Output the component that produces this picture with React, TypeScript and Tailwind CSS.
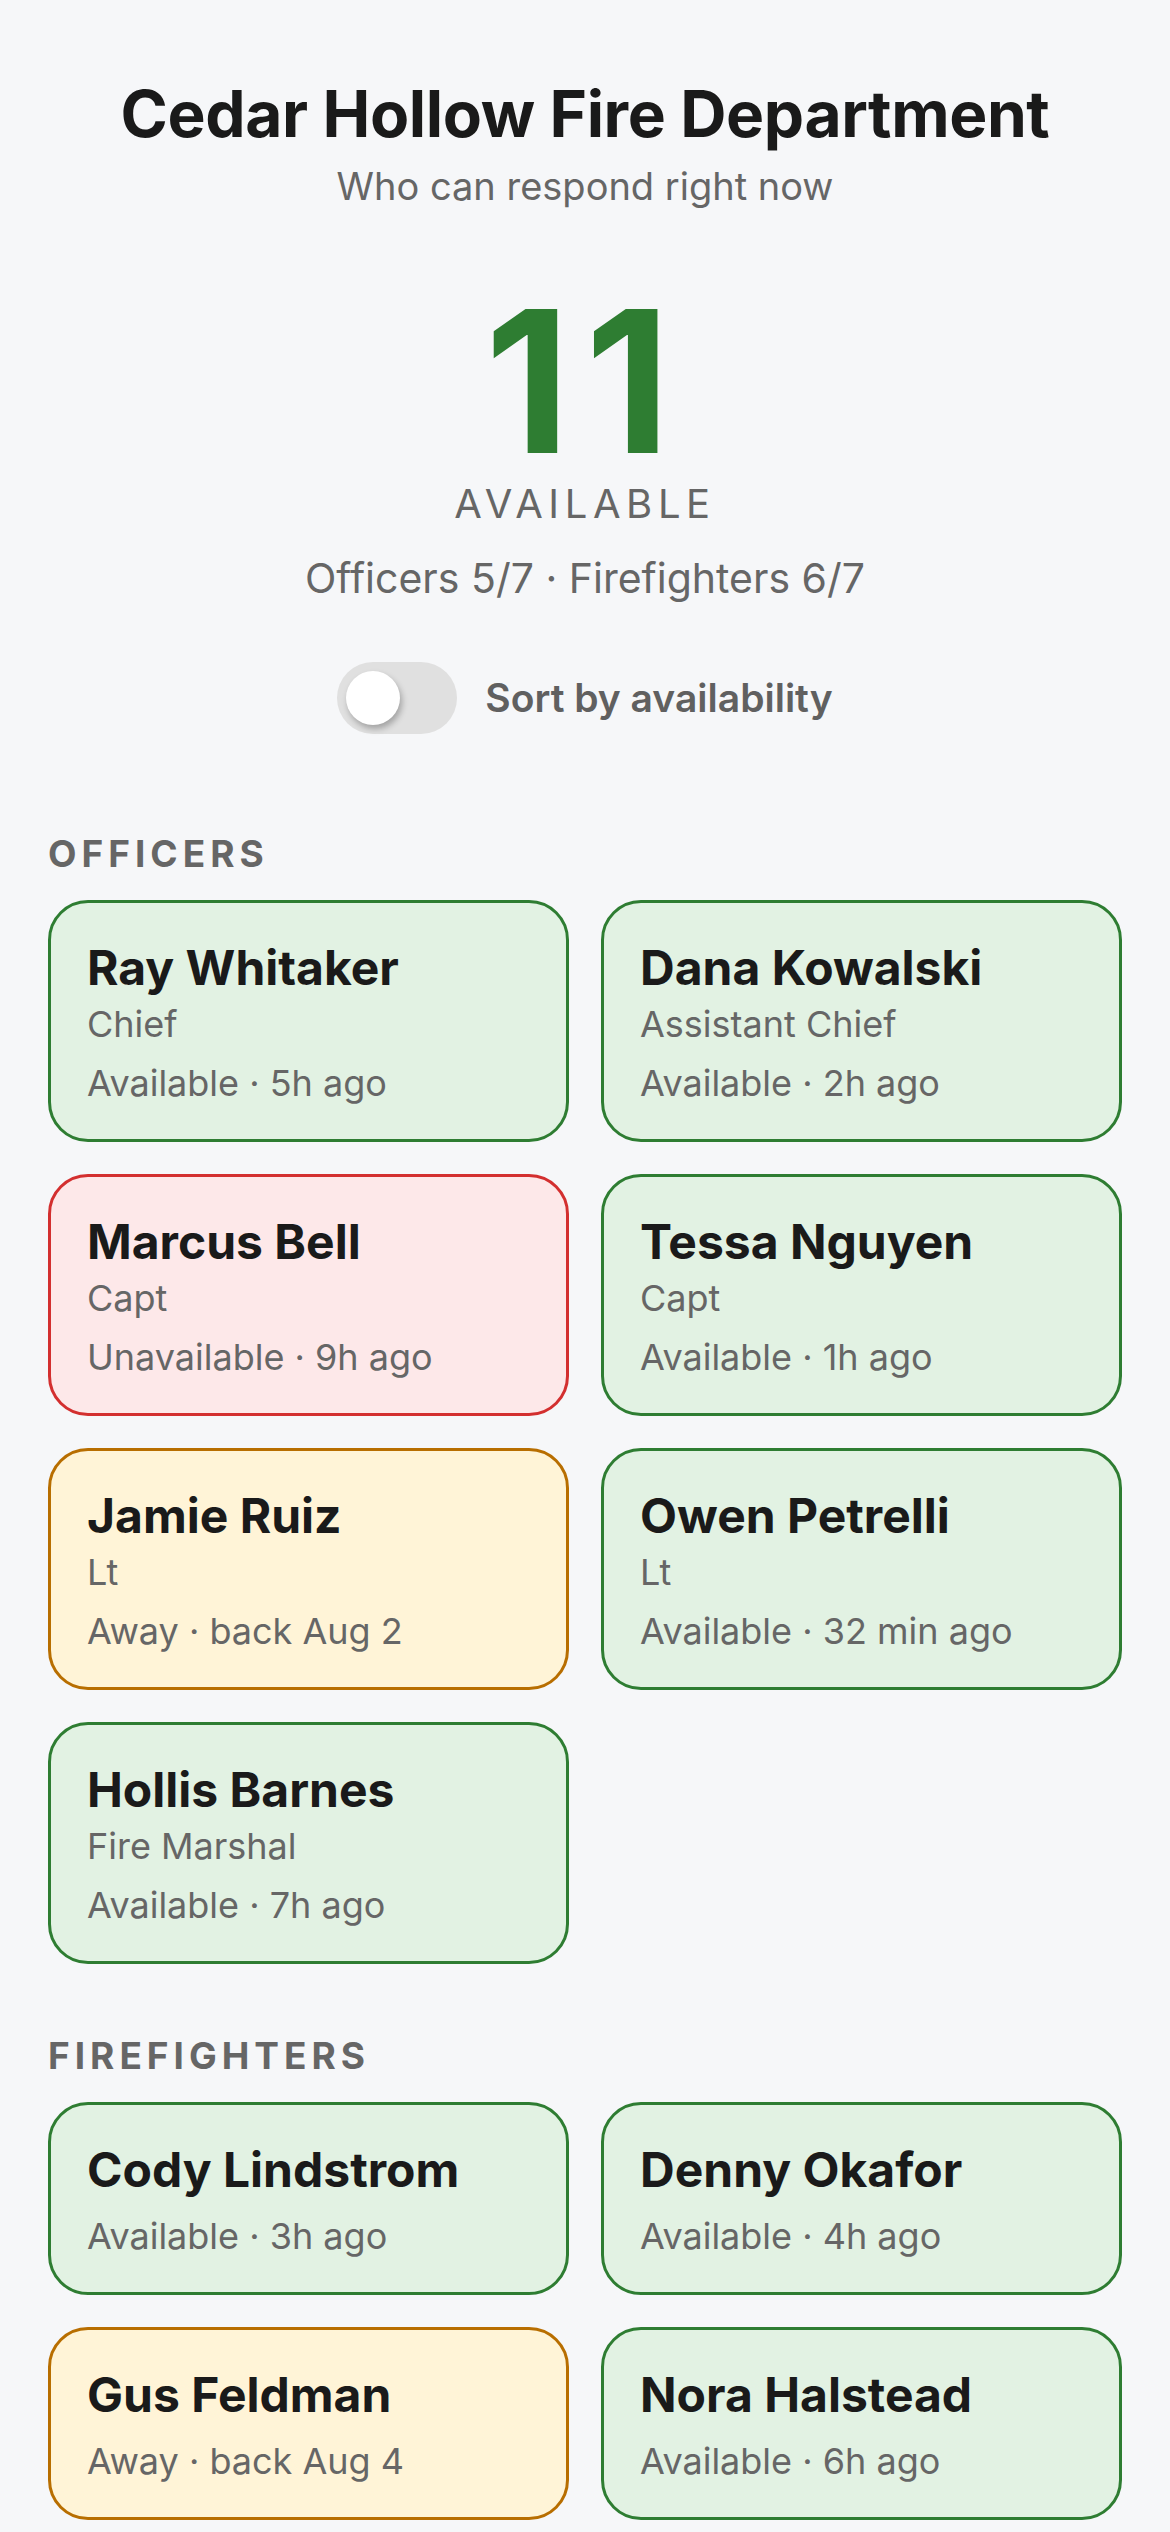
import { useState } from 'react';

type Status = 'available' | 'unavailable' | 'away';

type Member = {
  name: string;
  role?: string;
  status: Status;
  note: string;
};

const officers: Member[] = [
  { name: 'Ray Whitaker', role: 'Chief', status: 'available', note: '5h ago' },
  { name: 'Dana Kowalski', role: 'Assistant Chief', status: 'available', note: '2h ago' },
  { name: 'Marcus Bell', role: 'Capt', status: 'unavailable', note: '9h ago' },
  { name: 'Tessa Nguyen', role: 'Capt', status: 'available', note: '1h ago' },
  { name: 'Jamie Ruiz', role: 'Lt', status: 'away', note: 'back Aug 2' },
  { name: 'Owen Petrelli', role: 'Lt', status: 'available', note: '32 min ago' },
  { name: 'Hollis Barnes', role: 'Fire Marshal', status: 'available', note: '7h ago' },
];

const firefighters: Member[] = [
  { name: 'Cody Lindstrom', status: 'available', note: '3h ago' },
  { name: 'Denny Okafor', status: 'available', note: '4h ago' },
  { name: 'Gus Feldman', status: 'away', note: 'back Aug 4' },
  { name: 'Nora Halstead', status: 'available', note: '6h ago' },
];

const statusLabel: Record<Status, string> = {
  available: 'Available',
  unavailable: 'Unavailable',
  away: 'Away',
};

const statusCard: Record<Status, string> = {
  available: 'border-[#2e7d32] bg-[#e2f2e3]',
  unavailable: 'border-[#d32f2f] bg-[#fde8e9]',
  away: 'border-[#b86e00] bg-[#fff4d7]',
};

export default function App() {
  const [sorted, setSorted] = useState(false);

  return (
    <div
      className="min-h-screen bg-[#f6f7f9] px-[48px] pb-[60px] pt-[75px] text-[#1a1a1a]"
      style={{ fontFamily: 'Inter, "Noto Sans", sans-serif' }}
    >
      <header className="flex flex-col items-center text-center">
        <h1 className="text-[64px] font-bold leading-[77px] tracking-[-0.006em]">Cedar Hollow Fire Department</h1>
        <p className="mt-[11px] text-[38px] leading-[46px] text-[#666666]">Who can respond right now</p>

        <div className="mt-[73px] text-[198px] font-bold leading-[198px] tracking-[15px] text-[#2e7d32]">11</div>
        <div className="text-[40px] leading-[48px] tracking-[0.14em] text-[#666666]">AVAILABLE</div>
        <p className="mt-[25px] text-[41px] leading-[50px] text-[#666666]">Officers 5/7 · Firefighters 6/7</p>

        <button
          type="button"
          onClick={() => setSorted((value) => !value)}
          className="mt-[59px] flex items-center gap-[28px]"
        >
          <span
            className={`flex h-[72px] w-[120px] items-center rounded-full px-[9px] ${
              sorted ? 'justify-end bg-[#2e7d32]' : 'justify-start bg-[#e0e0e0]'
            }`}
          >
            <span className="size-[54px] rounded-full bg-white shadow-[2px_4px_6px_rgba(0,0,0,0.28)]" />
          </span>
          <span className="text-[39px] font-semibold leading-[48px] text-[#606060]">Sort by availability</span>
        </button>
      </header>

      <Section title="OFFICERS" members={officers} className="mt-[98px]" />
      <Section title="FIREFIGHTERS" members={firefighters} className="mt-[70px]" />
    </div>
  );
}

function Section({ title, members, className }: { title: string; members: Member[]; className: string }) {
  return (
    <section className={className}>
      <h2 className="text-[37px] font-bold leading-[44px] tracking-[0.135em] text-[#666666]">{title}</h2>
      <div className="mt-[24px] grid grid-cols-2 gap-[32px]">
        {members.map((member) => (
          <MemberCard key={member.name} member={member} />
        ))}
      </div>
    </section>
  );
}

function MemberCard({ member }: { member: Member }) {
  return (
    <article className={`rounded-[40px] border-[3px] px-[36px] pb-[34px] pt-[36px] ${statusCard[member.status]}`}>
      <p className="text-[48px] font-bold leading-[58px] text-[#1a1a1a]">{member.name}</p>
      {member.role ? (
        <p className="mt-[5px] text-[36px] leading-[44px] text-[#666666]">{member.role}</p>
      ) : null}
      <p className="mt-[15px] text-[36px] leading-[44px] text-[#666666]">
        {statusLabel[member.status]} · {member.note}
      </p>
    </article>
  );
}
